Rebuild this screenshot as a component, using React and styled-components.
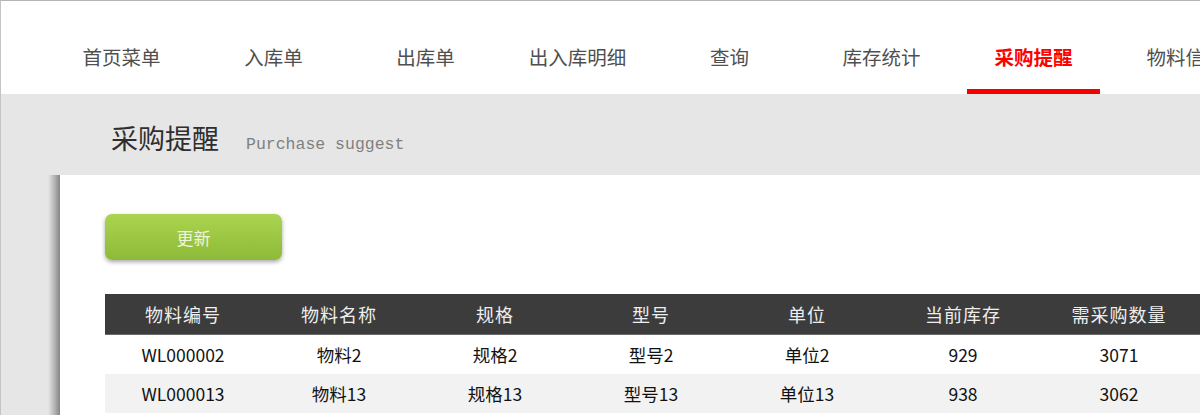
import styled, { createGlobalStyle } from 'styled-components';

const GlobalStyle = createGlobalStyle`
  html, body {
    margin: 0;
    padding: 0;
    background: #e6e6e6;
  }
  body {
    font-family: "Noto Sans CJK SC", "Noto Sans", sans-serif;
  }
  * {
    box-sizing: border-box;
  }
`;

const navItems = [
  '首页菜单',
  '入库单',
  '出库单',
  '出入库明细',
  '查询',
  '库存统计',
  '采购提醒',
  '物料信息',
];

const columns = ['物料编号', '物料名称', '规格', '型号', '单位', '当前库存', '需采购数量'];

const rows = [
  ['WL000002', '物料2', '规格2', '型号2', '单位2', '929', '3071'],
  ['WL000013', '物料13', '规格13', '型号13', '单位13', '938', '3062'],
];

const App = () => {
  return (
    <>
      <GlobalStyle />
      <Page>
        <Nav>
          {navItems.map((item) => (
            <NavItem key={item} $active={item === '采购提醒'}>
              {item}
            </NavItem>
          ))}
        </Nav>
        <TitleBar>
          <Title>采购提醒</Title>
          <SubTitle>Purchase suggest</SubTitle>
        </TitleBar>
        <Panel>
          <RefreshButton type="button">更新</RefreshButton>
          <Table>
            <HeadRow>
              {columns.map((col) => (
                <HeadCell key={col}>{col}</HeadCell>
              ))}
              <HeadCell />
            </HeadRow>
            {rows.map((row, i) => (
              <BodyRow key={row[0]} $striped={i % 2 === 1}>
                {row.map((cell, j) => (
                  <Cell key={j}>{cell}</Cell>
                ))}
                <Cell />
              </BodyRow>
            ))}
          </Table>
        </Panel>
      </Page>
    </>
  );
};
export default App;

const Page = styled.div`
  width: 1200px;
  height: 415px;
  overflow: hidden;
  border-top: 1px solid #b4b4b4;
  border-left: 1px solid #c4c4c4;
  background: #e6e6e6;
`;

const Nav = styled.ul`
  display: flex;
  gap: 19px;
  margin: 0;
  padding: 0 0 0 54px;
  height: 93px;
  list-style: none;
  background: #fff;
  overflow: hidden;
`;

const NavItem = styled.li`
  flex: 0 0 133px;
  height: 93px;
  padding-top: 22px;
  display: flex;
  align-items: center;
  justify-content: center;
  white-space: nowrap;
  font-size: 19.5px;
  color: ${({ $active }) => ($active ? '#ff0000' : '#4f4f4f')};
  font-weight: ${({ $active }) => ($active ? 700 : 400)};
  border-bottom: 5px solid ${({ $active }) => ($active ? '#f50000' : 'transparent')};
`;

const TitleBar = styled.div`
  display: flex;
  align-items: baseline;
  gap: 27px;
  height: 81px;
  padding: 29px 0 0 110px;
`;

const Title = styled.h1`
  margin: 0;
  font-size: 27px;
  line-height: 30px;
  font-weight: 400;
  color: #2e2e2e;
`;

const SubTitle = styled.span`
  font-family: "Liberation Mono", "DejaVu Sans Mono", monospace;
  font-size: 16.5px;
  color: #808080;
`;

const Panel = styled.section`
  position: relative;
  margin-left: 59px;
  padding: 39px 0 0 45px;
  height: 260px;
  background: #fff;

  &::before {
    content: '';
    position: absolute;
    top: 0;
    bottom: 0;
    left: -12px;
    width: 12px;
    background: linear-gradient(to right, rgba(0, 0, 0, 0), rgba(0, 0, 0, 0.22) 55%, rgba(0, 0, 0, 0.42));
  }
`;

const RefreshButton = styled.button`
  display: block;
  width: 177px;
  height: 46px;
  border: none;
  border-radius: 7px;
  background: linear-gradient(to bottom, #abd450, #8dba39);
  box-shadow: 0 2px 4px rgba(0, 0, 0, 0.35);
  color: #eef6dc;
  font-family: "Noto Sans CJK SC", sans-serif;
  font-size: 17px;
  cursor: pointer;
`;

const Table = styled.div`
  margin-top: 34px;
`;

const HeadRow = styled.div`
  display: grid;
  grid-template-columns: repeat(7, 156px) 1fr;
  height: 41px;
  background: #3c3c3c;
  border-bottom: 1px solid #6a6a6a;
`;

const HeadCell = styled.div`
  display: flex;
  align-items: center;
  justify-content: center;
  font-size: 18px;
  letter-spacing: 1px;
  color: #eee;
`;

const BodyRow = styled.div`
  display: grid;
  grid-template-columns: repeat(7, 156px) 1fr;
  height: 39px;
  background: ${({ $striped }) => ($striped ? '#f2f2f2' : '#fff')};
`;

const Cell = styled.div`
  display: flex;
  align-items: center;
  justify-content: center;
  font-size: 17.5px;
  color: #111;
`;
